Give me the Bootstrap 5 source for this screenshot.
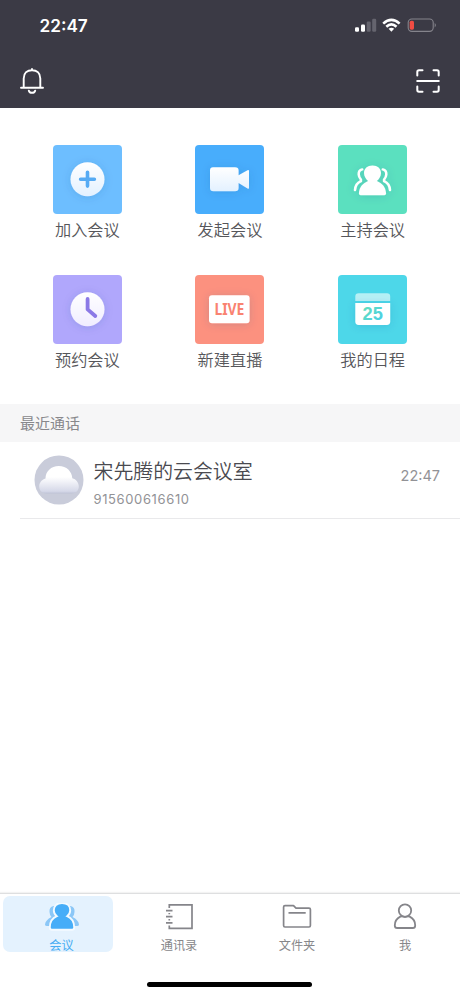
<!DOCTYPE html>
<html lang="zh-CN">
<head>
<meta charset="utf-8">
<meta name="viewport" content="width=device-width, initial-scale=1">
<title>会议</title>
<link rel="stylesheet" href="https://cdn.jsdelivr.net/npm/bootstrap@5.3.0/dist/css/bootstrap.min.css">
<style>
body{font-family:Inter,"Noto Sans CJK SC",sans-serif;color:#56565c;background:#fff}
svg{display:block;flex:none}
.phone{width:460px;height:996px}
.top-area{height:108px;background:#3b3a45;color:#fff}
.status{height:50px;padding:0 23.5px 0 39.5px}
.clock{font-size:17.2px;font-weight:600;line-height:50px;padding-top:1px}
.tools{height:58px;padding:4px 20px 0 19px}
.actions{height:296px;padding:37px 16px 0}
.action{height:130px}
.action span{font-size:16.2px;font-weight:350;line-height:24px;margin-top:4px;color:#56565a}
.section-title{height:38px;background:#f6f6f7;color:#88888c;font-size:15px;line-height:38px;padding:1px 0 0 20px}
.call{height:77px;margin-left:20px;padding:0 20px 0 14px;border-bottom:1px solid #e9e9eb}
.call-info{margin-left:9.5px;padding-top:5px}
.call-name{font-size:19.9px;font-weight:350;line-height:28px;color:#4a4a50}
.call-no{font-size:13px;line-height:18px;margin-top:4px;color:#929296;letter-spacing:.62px}
.call-time{font-size:14.5px;color:#929296;margin-top:-8px}
.tabs{height:103px;border-top:1px solid #dedfe0;box-shadow:0 -1px 1px #f3f3f3;padding:2px 5px 0 3px}
.tab{height:56px;font-size:12.2px;line-height:16px;color:#87878a;padding-top:7px}
.tab span{margin-top:7px}
.tab-meet{width:110px;margin-right:8px;padding-left:7px;background:#e4f2fe;color:#48adf3;border-radius:7px}
.tab-book{width:118px;padding-right:2px}.tab-file{width:116px}.tab-me{width:100px}
.home-bar{width:165px;height:5.5px;background:#000;margin-top:29.5px}
.glyph-text{font-family:"Noto Sans",sans-serif;font-weight:700}
</style>
</head>
<body>
<svg width="0" height="0" class="position-absolute">
<defs>
<linearGradient id="gBlue" x2="0" y2="1"><stop stop-color="#fff"/><stop offset="1" stop-color="#e3f1ff"/></linearGradient>
<linearGradient id="gViolet" x2="0" y2="1"><stop stop-color="#fff"/><stop offset="1" stop-color="#f0edff"/></linearGradient>
<linearGradient id="gCloud" x2="0" y2="1"><stop offset=".4" stop-color="#fff"/><stop offset=".92" stop-color="#d5d8e8"/><stop offset="1" stop-color="#bfc3d6"/></linearGradient>
<linearGradient id="gDate" x2="1" y2="1"><stop stop-color="#66e0b8"/><stop offset="1" stop-color="#45cdec"/></linearGradient>
<filter id="soft" x="-40%" y="-40%" width="180%" height="180%"><feDropShadow dx="0" dy="1" stdDeviation="4" flood-color="#234b90" flood-opacity=".16"/></filter>
</defs>
</svg>
<div class="phone d-flex flex-column overflow-hidden">
  <header class="top-area">
    <div class="status d-flex justify-content-between align-items-center">
      <div class="clock">22:47</div>
      <svg width="82" height="16" viewBox="0 0 82 16">
        <rect x="0" y="10.2" width="4" height="4.6" rx="1.2" fill="#fff"/><rect x="6" y="7.6" width="4" height="7.2" rx="1.2" fill="#fff"/>
        <rect x="11.7" y="4.6" width="4" height="10.2" rx="1.2" fill="#65646e"/><rect x="17.2" y="1.8" width="4" height="13" rx="1.2" fill="#65646e"/>
        <g fill="none" stroke="#fff" stroke-width="2.6"><path d="M28.2 6.6Q36.4-.9 44.6 6.6"/><path d="M31.3 9.7Q36.4 5 41.5 9.7"/></g>
        <path d="M33.6 11.8Q36.4 9.5 39.2 11.8L36.4 14.8Z" fill="#fff"/>
        <rect x="53.2" y="2" width="25" height="12.4" rx="3.6" fill="none" stroke="#85848c" stroke-width="1.1"/>
        <rect x="54.7" y="3.7" width="4.3" height="9" rx="1.6" fill="#f14c43"/><path d="M79.7 6Q82 8.2 79.7 10.4Z" fill="#85848c"/>
      </svg>
    </div>
    <div class="tools d-flex justify-content-between align-items-center">
      <svg width="26" height="28" viewBox="0 0 26 28" fill="none" stroke="#fff" stroke-width="1.9" stroke-linecap="round"><path d="M4.7 20.6V11.4C4.7 6 8.3 3.2 13 3.2S21.3 6 21.3 11.4V20.6M2 20.8H24M13 2V3M9.8 23.6Q10.5 25.8 13 25.8T16.2 23.6"/></svg>
      <svg width="24" height="24" viewBox="0 0 24 24" fill="none" stroke="#fff" stroke-width="2" stroke-linecap="round" stroke-linejoin="round"><path d="M1.3 6.5V3Q1.3 1.3 3 1.3H6.5M17.5 1.3H21Q22.7 1.3 22.7 3V6.5M22.7 17.5V21Q22.7 22.7 21 22.7H17.5M6.5 22.7H3Q1.3 22.7 1.3 21V17.5M1.2 12H22.8"/></svg>
    </div>
  </header>

  <main class="flex-grow-1">
    <div class="actions">
      <div class="row row-cols-3 g-0">
        <div class="col action d-flex flex-column align-items-center">
          <svg width="69" height="69" viewBox="0 0 69 69"><rect width="69" height="69" rx="4" fill="#6dbeff"/><circle cx="34.5" cy="34.2" r="17" fill="url(#gBlue)" filter="url(#soft)"/><path d="M34.5 27.3V41.1M27.6 34.2H41.4" stroke="#56abf4" stroke-width="3.6" stroke-linecap="round"/></svg>
          <span>加入会议</span>
        </div>
        <div class="col action d-flex flex-column align-items-center">
          <svg width="69" height="69" viewBox="0 0 69 69"><rect width="69" height="69" rx="4" fill="#48adfc"/><path d="M18 22.3H40Q43.6 22.3 43.6 25.5V30.3L52.5 25.3Q54 24.6 54 26V43Q54 44.2 52.5 43.4L43.6 38V43Q43.6 46.2 40 46.2H18.5Q15 46.2 15 43V25.5Q15 22.3 18 22.3Z" fill="url(#gBlue)" filter="url(#soft)"/></svg>
          <span>发起会议</span>
        </div>
        <div class="col action d-flex flex-column align-items-center">
          <svg width="69" height="69" viewBox="0 0 69 69"><rect width="69" height="69" rx="4" fill="#5be0bf"/><g filter="url(#soft)"><path d="M34.5 20.5C39.6 20.5 43 23.6 43 28C43 31.4 41 34 38.9 36C44 38.5 47.8 41.6 48.1 48.6Q48 50.3 46.4 50.3H22.6Q21 50.3 20.9 48.6C21.2 41.6 25 38.5 30.1 36C28 34 26 31.4 26 28C26 23.6 29.4 20.5 34.5 20.5Z" fill="#fff"/><path d="M24.2 24.4Q20.5 25.2 20.7 29.5Q20.8 32 22.9 34.5V36.2Q17.4 38.7 17 45M44.8 24.4Q48.5 25.2 48.3 29.5Q48.2 32 46.1 34.5V36.2Q51.6 38.7 52 45" fill="none" stroke="#fff" stroke-width="2.5" stroke-linecap="round" stroke-linejoin="round"/></g></svg>
          <span>主持会议</span>
        </div>
        <div class="col action d-flex flex-column align-items-center">
          <svg width="69" height="69" viewBox="0 0 69 69"><rect width="69" height="69" rx="4" fill="#b0a7fc"/><circle cx="34.5" cy="34.2" r="17" fill="url(#gViolet)" filter="url(#soft)"/><path d="M34.6 24V34.4L42.3 41" fill="none" stroke="#8b79e6" stroke-width="3.8" stroke-linecap="round" stroke-linejoin="round"/></svg>
          <span>预约会议</span>
        </div>
        <div class="col action d-flex flex-column align-items-center">
          <svg width="69" height="69" viewBox="0 0 69 69"><rect width="69" height="69" rx="4" fill="#fc917f"/><rect x="14" y="20.3" width="40.6" height="28" rx="3" fill="#fff" filter="url(#soft)"/><text class="glyph-text" x="19.4" y="40.2" font-size="15.8" textLength="30" lengthAdjust="spacingAndGlyphs" fill="#f98371">LIVE</text></svg>
          <span>新建直播</span>
        </div>
        <div class="col action d-flex flex-column align-items-center">
          <svg width="69" height="69" viewBox="0 0 69 69"><rect width="69" height="69" rx="4" fill="#4dd7e9"/><path d="M20.5 18.2H49Q52.2 18.2 52.2 21.4V26H17.3V21.4Q17.3 18.2 20.5 18.2Z" fill="#b5f0f5"/><path d="M17.3 28.1H52.2V46.6Q52.2 50 48.8 50H20.7Q17.3 50 17.3 46.6Z" fill="#fff" filter="url(#soft)"/><text x="24.6" y="44.9" font-family="Liberation Sans,sans-serif" font-weight="700" font-size="17.8" textLength="20.3" lengthAdjust="spacingAndGlyphs" fill="url(#gDate)">25</text></svg>
          <span>我的日程</span>
        </div>
      </div>
    </div>
    <div class="section-title">最近通话</div>
    <div class="call d-flex align-items-center">
      <svg width="50" height="50" viewBox="0 0 50 50"><circle cx="25" cy="25" r="24.5" fill="#c9ccda"/><path d="M12.5 38.5C8 38.5 5.2 35.3 5.2 31.5S7.7 24.8 11.5 23.5C11.5 16.5 17 11 24.8 11S38 16.5 38.3 23.3C42 24.2 44.8 27.6 44.8 31.5S41.8 38.5 37.5 38.5Z" fill="url(#gCloud)"/></svg>
      <div class="call-info flex-grow-1">
        <div class="call-name">宋先腾的云会议室</div>
        <div class="call-no">915600616610</div>
      </div>
      <div class="call-time">22:47</div>
    </div>
  </main>

  <nav class="tabs">
    <div class="d-flex">
      <div class="tab tab-meet d-flex flex-column align-items-center">
        <svg width="36" height="28" viewBox="0 0 36 28"><path d="M9.5 3Q5 4 5.5 9Q5.5 11.5 7.5 14Q1.5 17 1 21.5Q1 23 3 23H11V3ZM26.5 3Q31 4 30.5 9Q30.5 11.5 28.5 14Q34.5 17 35 21.5Q35 23 33 23H25V3Z" fill="#8bc7f7"/><path d="M18 0C23.2 0 26.2 3.2 26.2 7.2Q26.2 10.7 23.2 13.2C27.5 15 30.2 18.5 30.2 24.5Q30.2 26.8 28 26.8H8Q5.8 26.8 5.8 24.5C5.8 18.5 8.5 15 12.8 13.2Q9.8 10.7 9.8 7.2C9.8 3.2 12.8 0 18 0Z" fill="#46adf8" stroke="#f3faff" stroke-width="1.9"/></svg>
        <span>会议</span>
      </div>
      <div class="tab tab-book d-flex flex-column align-items-center">
        <svg width="30" height="28" viewBox="0 0 30 28" fill="none" stroke="#85858a" stroke-width="1.7"><path d="M5.3 5V1.9H28V25.4H5.3V22.4M5.3 9.9V11.3M5.3 16V17.4"/><path d="M2 7.6H8.5M2 13.7H8.5M2 19.9H8.5"/></svg>
        <span>通讯录</span>
      </div>
      <div class="tab tab-file d-flex flex-column align-items-center">
        <svg width="30" height="28" viewBox="0 0 30 28" fill="none" stroke="#85858a" stroke-width="1.7" stroke-linejoin="round"><path d="M3 2.6H11.5L14 5.2H27Q28.4 5.2 28.4 6.6V22.6Q28.4 24 27 24H3Q1.6 24 1.6 22.6V4Q1.6 2.6 3 2.6ZM6.5 9.8H23.7"/></svg>
        <span>文件夹</span>
      </div>
      <div class="tab tab-me d-flex flex-column align-items-center">
        <svg width="24" height="28" viewBox="0 0 24 28" fill="none" stroke="#85858a" stroke-width="1.8" stroke-linejoin="round"><circle cx="12" cy="7.6" r="6.2"/><path d="M7.3 13.6Q9 12.9 12 13.9Q15 12.9 16.7 13.6Q22.2 16.4 22.2 22.4Q22.2 25 19.8 25H4.2Q1.8 25 1.8 22.4Q1.8 16.4 7.3 13.6Z"/></svg>
        <span>我</span>
      </div>
    </div>
    <div class="home-bar rounded-pill mx-auto"></div>
  </nav>
</div>
<script src="https://cdn.jsdelivr.net/npm/bootstrap@5.3.0/dist/js/bootstrap.bundle.min.js"></script>
</body>
</html>
